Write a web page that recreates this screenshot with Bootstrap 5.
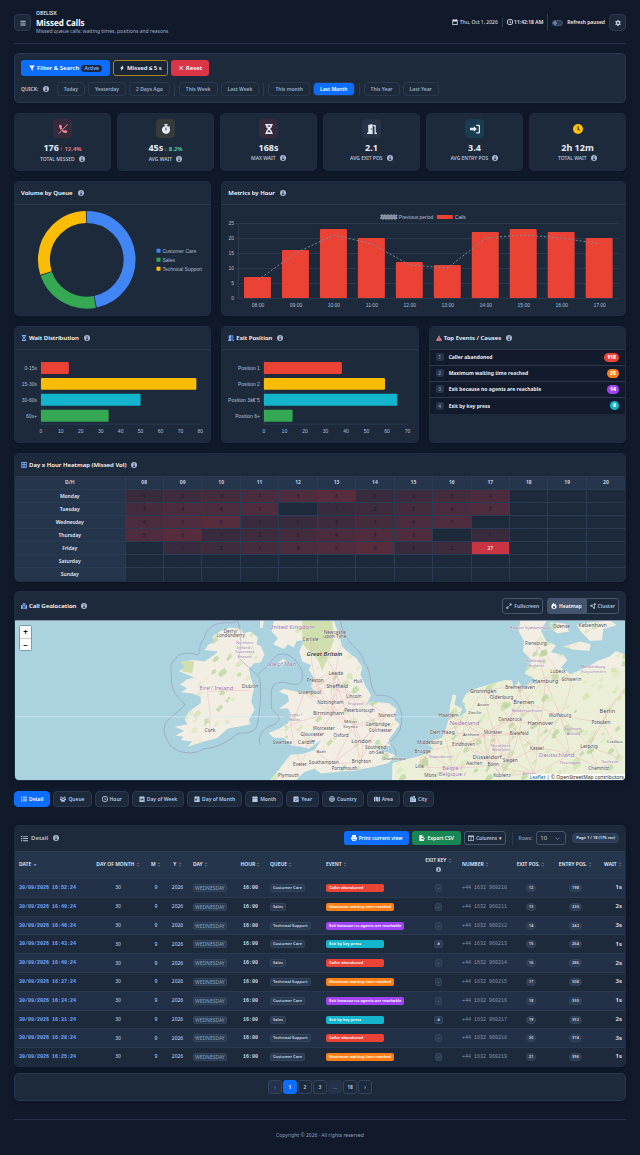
<!DOCTYPE html>
<html lang="en" data-bs-theme="dark">
<head>
<meta charset="utf-8">
<meta name="viewport" content="width=device-width, initial-scale=1">
<title>Missed Calls</title>
<link href="https://cdn.jsdelivr.net/npm/bootstrap@5.3.0/dist/css/bootstrap.min.css" rel="stylesheet">
<style>
:root{--bg:#111a2b;--panel:#1c2a3c;--line:#2a394e;--head:#25354c;--muted:#9fadc3;--ink:#e6ecf5;--soft:#c3cedf}
body{background:var(--bg);color:var(--ink);font:400 6px/8px "Noto Sans",sans-serif}
.page{padding:0 14px 18px}
.mt-10{margin-top:10px}
.ic{width:6px;height:6px;fill:currentColor;flex:none;display:inline-block;vertical-align:-1px}
.inf{color:#a9b9d2;margin-left:3px}
h1{font-size:8px;line-height:11px;font-weight:700;margin:0}
h2{font-size:6px;line-height:8px;font-weight:600;margin:0;display:flex;align-items:center;gap:2px}
h2 .lead-ic{color:#7fb0ff}
.t5{font-size:5px;line-height:7px}
.top{height:44px;border-bottom:1px solid #22304a;padding-top:2px;gap:5px}
.sq{width:17px;height:17px;border:1px solid var(--line);border-radius:4px;background:var(--panel);color:var(--soft);padding:0;display:grid;place-items:center}
.vr-x{width:1px;background:#2b3b52;align-self:center;height:9px}
.vr-x.tall{height:13px;margin:0 1px}
.vr-x.full{height:17px}
.sw{width:11px;height:6px;appearance:none;border:1px solid #4a5a75;border-radius:3px;background:radial-gradient(circle at 2px 2px,#6a7b98 2px,#2b3b52 2px);margin:0}
.panel{background:var(--panel);border:1px solid #1f2d40;border-radius:5px;box-shadow:0 2px 5px #0a111f80;overflow:hidden}
.panel.edge{border-color:var(--line)}
.ph{height:23px;padding:0 6px;border-bottom:1px solid var(--line);display:flex;align-items:center}
.b{border:1px solid transparent;border-radius:3px;height:16px;padding:0 6px;font-weight:600;color:#fff;background:none;display:inline-flex;align-items:center;justify-content:center;gap:2px;font-size:6px;line-height:8px;white-space:nowrap}
.blue{background:#0d6efd}.red{background:#dc3545}.green{background:#198754}
.filterbox{margin-top:9px;padding:6px}
.first{gap:3px;margin-bottom:6px}.quick{gap:3px}
.wide{width:89px}.warnb{border-color:#a9841c;background:#1a2536;padding:0 5px}
.ql{font-size:5px;font-weight:600;color:var(--soft);margin-right:5px}
.pill{height:14px;color:var(--muted);border-color:var(--line);border-radius:4px;font-size:5px;padding:0 6px}
.pill.blue{color:#fff}
.act{font-size:5px;line-height:7px;background:#1b2740;color:#9ec5ff;border-radius:4px;padding:0 3px;font-weight:500}
.kpis{gap:6px}
.kpi{flex:1 1 0;height:58px;text-align:center;padding-top:5px}
.kic{width:19px;height:19px;border-radius:4px;display:grid;place-items:center;margin:0 auto 4px}
.kic .ic{width:10px;height:10px}
.kv{font-size:9px;line-height:12px;font-weight:700}
.kv small{font-size:6px;font-weight:600;margin-left:1px}
.kl{font-size:5px;line-height:7px;color:var(--soft);font-weight:500;margin-top:1px}
.r10{--bs-gutter-x:10px;--bs-gutter-y:10px}
svg.chart{display:block;width:100%}
svg.chart text{font:5px "Liberation Sans",Arial,sans-serif;fill:#b3bfd1}
.ev{background:#121b2c;border-bottom:1px solid var(--line);height:16px;padding:0 6px;gap:5px;font-weight:700;font-size:5px}
.ev i{font-style:normal;font-weight:400;font-size:5px;line-height:8px;width:8px;text-align:center;background:#25354c;color:var(--muted);border-radius:2px}
.ev b{margin-left:auto;border-radius:5px;font-size:5px;line-height:9px;padding:0 3px;color:#fff}
table{width:100%;table-layout:fixed;border-collapse:collapse}
.heat{font-size:5px;line-height:7px;text-align:center}
.heat td,.heat th{border:1px solid #2a3c54;padding:0;height:13px}
.heat thead th{background:var(--head);color:var(--soft);border-top:0}
.heat tbody th{background:var(--head);font-weight:600}
.heat td{color:#131c2c}
.heat tr>:first-child{border-left:0;width:110px}.heat tr>:last-child{border-right:0}
.heat tr:last-child>*{border-bottom:0}
.geo{height:28px;border-bottom:0}
.map{position:relative;height:160px;background:#aad3df;border-top:1px solid #8d99ad}
.map>svg{width:100%;height:100%;display:block}
.map text{font-family:"Noto Sans",sans-serif;text-anchor:middle;paint-order:stroke;stroke:#ffffffa0;stroke-width:2px;fill:#4c4c50}
.zoomer{position:absolute;left:4px;top:4px;width:13px;border:1px solid #7d9ba5;border-radius:2px;overflow:hidden;background:#fff}
.zoomer button{display:block;width:100%;height:12px;border:0;background:#fff;color:#111;font-weight:700;font-size:8px;line-height:11px;padding:0}
.zoomer button+button{border-top:1px solid #ccc}
.attr{position:absolute;right:0;bottom:0;background:#ffffffcc;color:#333;font-size:5px;line-height:6px;padding:0 1px;white-space:nowrap}
.attr a{color:#0078a8;text-decoration:none}
.ob{border-color:#46566e;color:#b8c5d9;padding:0 3px;gap:2px;font-size:5px}
.ob.on{background:#44546c;color:#fff}
.tabs{gap:3px}
.tab{background:var(--panel);border-color:var(--line);color:#b8c9e4;border-radius:4px;padding:0 6px;font-size:5px}
.tab.blue{color:#fff;border-color:#0d6efd;background:#0d6efd}
.detail{margin-top:18px}
.dh{height:26px}
.dtl{color:#b8c5d9}
.dtl .ic:first-child{width:7px;height:7px;margin-right:1px}
.tools{gap:3px}.tools .b{height:14px;font-size:5px}.tools .vr-x{margin:0 3px}
.tools label{margin-right:1px;color:var(--muted);font-size:5px}
.dt{height:214px;font-size:5px;line-height:7px}
.dt td,.dt th{padding:0 4px;vertical-align:middle;white-space:nowrap}
.dt th{background:var(--head);height:27px;font-size:5px;font-weight:600;text-transform:uppercase;border-bottom:1px solid var(--line)}
.dt th .srt{color:#56677f;width:4px;height:5px}
.dt th .cur{color:#74a9ff}
.dt .inf{width:5px;height:5px;margin:3px 0 0}
.dt td{border-bottom:1px solid var(--line);color:#d0d9e7}
.dt tr:nth-child(odd) td{background:#233148}
.dt tr:last-child td{border-bottom:0}
.mono{font-family:"Liberation Mono",monospace}
.dt .dte{color:#74a9ff;font-weight:700}
.chip{display:inline-block;background:#2a3a51;border:1px solid #33445c;border-radius:2px;font-size:4px;line-height:6px;padding:0 2px;font-weight:600}
.chip.day{font-size:5px;font-weight:400;color:#92a1b8;padding:0 1px}
.chip.rd{border-radius:4px;background:#2d3d54}
.chip.num{color:var(--soft)}
.pgs{line-height:8px;margin-left:3px;padding:0 3px}
.evt{display:inline-block;min-width:58px;border-radius:2px;color:#fff;font-weight:600;font-size:4px;line-height:8px;padding:0 3px}
.nm{color:#8494ad}.wt{font-size:6px;font-weight:600;color:#e6ecf5}
.sel{width:30px;height:14px;background:transparent url("data:image/svg+xml,%3Csvg xmlns='http://www.w3.org/2000/svg' viewBox='0 0 16 16'%3E%3Cpath fill='none' stroke='%239fadc3' stroke-width='2' d='m2 5 6 6 6-6'/%3E%3C/svg%3E") no-repeat right 5px center/5px;border:1px solid #46566e;border-radius:3px;color:var(--soft);font-size:6px;line-height:8px;padding:0 3px;appearance:none}
.pager{margin-top:6px;padding:6px;gap:1px}
.pg{width:14px;height:14px;border:1px solid #33445c;border-radius:3px;color:var(--soft);font-size:5px;font-weight:600;text-decoration:none;display:grid;place-items:center}
.pg.off{background:#25334a;color:#71819b}
.pg.cur{background:#0d6efd;border-color:#0d6efd;color:#fff}
footer{border-top:1px solid #22304a;margin-top:18px;padding-top:11px;text-align:center;color:#93a0b6;font-size:5px}
</style>
</head>
<body>
<svg width="0" height="0" class="position-absolute" aria-hidden="true">
<symbol id="i-menu" viewBox="0 0 16 16"><path d="M1 2h14v2.500H1zM1 7h14v2.500H1zM1 12h14v2.500H1z"/></symbol>
<symbol id="i-info" viewBox="0 0 16 16"><path fill-rule="evenodd" d="M8 0a8 8 0 1 0 0 16A8 8 0 0 0 8 0zM7 3h2.500v2.300H7zM6 6.700h3.500V11H11v2H5.500v-2H7V8.700H6z"/></symbol>
<symbol id="i-sort" viewBox="0 0 12 16"><path d="m6 1 5 5H1zM6 15l5-5H1z"/></symbol>
<symbol id="i-down" viewBox="0 0 12 16"><path d="m6 13 6-6H0z"/></symbol>
<symbol id="i-filter" viewBox="0 0 16 16"><path d="M.5 1h15L10 8.500V15l-4-2.500v-4z"/></symbol>
<symbol id="i-bolt" viewBox="0 0 16 16"><path d="M10.500 0 3 9h4l-1.500 7L13 6.500H9z"/></symbol>
<symbol id="i-x" viewBox="0 0 16 16"><path d="m3.500 2 4.500 4.500L12.500 2 14 3.500 9.500 8l4.500 4.500-1.500 1.500L8 9.500 3.500 14 2 12.500 6.500 8 2 3.500z"/></symbol>
<symbol id="i-cal" viewBox="0 0 16 16"><path fill-rule="evenodd" d="M4 0h2v2h4V0h2v2h3v14H1V2h3zM3 6.500V14h10V6.500z"/></symbol>
<symbol id="i-calf" viewBox="0 0 16 16"><path d="M4 0h2v2h4V0h2v2h3v3H1V2h3zM1 6h14v10H1z"/></symbol>
<symbol id="i-calw" viewBox="0 0 16 16"><path fill-rule="evenodd" d="M4 0h2v2h4V0h2v2h3v3H1V2h3zM1 6h14v10H1zm3 2.500v3h8v-3z"/></symbol>
<symbol id="i-cald" viewBox="0 0 16 16"><path fill-rule="evenodd" d="M4 0h2v2h4V0h2v2h3v3H1V2h3zM1 6h14v10H1zm2.500 2v4h4V8z"/></symbol>
<symbol id="i-calc" viewBox="0 0 16 16"><path fill-rule="evenodd" d="M4 0h2v2h4V0h2v2h3v3H1V2h3zM1 6h14v10H1zm3.500 4.500 2.500 3 5-4-1-1.300-3.700 3-1.500-1.800z"/></symbol>
<symbol id="i-clock" viewBox="0 0 16 16"><path fill-rule="evenodd" d="M8 0a8 8 0 1 0 0 16A8 8 0 0 0 8 0zm0 2a6 6 0 1 1 0 12A6 6 0 0 1 8 2zM7 4v5l3.500 2 1-1.600L9 8V4z"/></symbol>
<symbol id="i-clockf" viewBox="0 0 16 16"><path fill-rule="evenodd" d="M8 0a8 8 0 1 0 0 16A8 8 0 0 0 8 0zM7.200 3.500v5l3.300 2.300.9-1.300-2.600-1.800V3.500z"/></symbol>
<symbol id="i-gear" viewBox="0 0 16 16"><path fill-rule="evenodd" d="M6.500 0h3l.5 2.300 1.500.8 2.200-.8 1.500 2.600L13.500 6.500v3l1.700 1.600-1.500 2.600-2.200-.8-1.500.8-.5 2.300h-3L6 13.700l-1.500-.8-2.200.8L.8 11.100l1.700-1.600v-3L.8 4.900l1.500-2.600 2.200.8L6 2.300zM8 5.500a2.500 2.500 0 1 0 0 5 2.500 2.500 0 0 0 0-5z"/></symbol>
<symbol id="i-phone" viewBox="0 0 16 16"><path d="M4.500 1 2 1.700C1 4.500 3 8 4.500 9.500L7 7 5.700 5.700 6.500 4zM6 11c2 2 5 4 8 3l1-3-3.500-1.500L10 11 8.500 9.500z"/><path d="m1 15.500 14.500-15" stroke="currentColor" stroke-width="1.500"/></symbol>
<symbol id="i-stop" viewBox="0 0 16 16"><path fill-rule="evenodd" d="M5.500 0h5v2H9v1a6.500 6.500 0 0 1 3 1.300l1-1 1.500 1.400-1.100 1.100A6.500 6.500 0 1 1 7 3V2H5.500zM7.200 5.500v5h1.600v-5z"/></symbol>
<symbol id="i-hour" viewBox="0 0 16 16"><path fill-rule="evenodd" d="M2 0h12v2h-1c0 3-1.500 4.500-3.500 6 2 1.500 3.500 3 3.500 6h1v2H2v-2h1c0-3 1.500-4.500 3.500-6C4.500 6.500 3 5 3 2H2zm3.500 2.500c.2 1 .5 1.500 1 2h3c.5-.5.8-1 1-2zM8 9.500c-1.500 1-2.300 2-2.500 3.500h5C10.300 11.500 9.500 10.500 8 9.500z"/></symbol>
<symbol id="i-door" viewBox="0 0 16 16"><path fill-rule="evenodd" d="M2 1.500 9 0v16H0v-2h2zM6 7v2h1.500V7zM10 1.500h4V14h2v2h-4V3.500h-2z"/></symbol>
<symbol id="i-in" viewBox="0 0 16 16"><path d="M6 3.500 11 8l-5 4.500V10H0V6h6zM10 1h4a2 2 0 0 1 2 2v10a2 2 0 0 1-2 2h-4v-2h4V3h-4z"/></symbol>
<symbol id="i-warn" viewBox="0 0 16 16"><path fill-rule="evenodd" d="M8 .5 16 15H0zM7 5.500v4.500h2V5.500zm0 6V13h2v-1.500z"/></symbol>
<symbol id="i-grid" viewBox="0 0 16 16"><path fill-rule="evenodd" d="M1 0h14v16H1zm2 2.500v3h4v-3zm6 0v3h4v-3zM3 7v3h4V7zm6 0v3h4V7zm-6 4.500v2.500h4v-2.500zm6 0v2.500h4v-2.500z"/></symbol>
<symbol id="i-geo" viewBox="0 0 16 16"><path fill-rule="evenodd" d="M8 0a4 4 0 0 1 4 4c0 2-4 6-4 6S4 6 4 4a4 4 0 0 1 4-4zm0 2.500a1.500 1.500 0 1 0 0 3 1.500 1.500 0 0 0 0-3zM0 6l3-1 2 4v6l-5 1zM6 11l2 1.500L10 11v5l-4-1zM11 9l2-3 3-1v10l-5 1z"/></symbol>
<symbol id="i-full" viewBox="0 0 16 16"><path d="M9 1h6v6l-2-2-3 3-2-2 3-3zM7 15H1V9l2 2 3-3 2 2-3 3z"/></symbol>
<symbol id="i-fire" viewBox="0 0 16 16"><path fill-rule="evenodd" d="M6 0c2 1.500 3 3 4 4l1.500-2C14 4.500 15 7 15 9.500a7 6.500 0 0 1-14 0C1 6 4 3 6 0zm2 6.500c-1.500 2-3 3-3 4.500a3 3 0 0 0 6 0c0-1-.5-2-1-3l-1 1z"/></symbol>
<symbol id="i-share" viewBox="0 0 16 16"><path fill="none" stroke="currentColor" stroke-width="2" d="M13 3 3 7l8 6z"/><circle cx="13" cy="3" r="2.500"/><circle cx="3" cy="7" r="2.500"/><circle cx="11" cy="13" r="2.500"/></symbol>
<symbol id="i-list" viewBox="0 0 16 16"><path d="M0 2h3v2.500H0zM5 2h11v2H5zM0 7h3v2.500H0zM5 7h11v2H5zM0 12h3v2.500H0zM5 12h11v2H5z"/></symbol>
<symbol id="i-users" viewBox="0 0 16 16"><circle cx="3" cy="3" r="2"/><circle cx="13" cy="3" r="2"/><circle cx="8" cy="5.500" r="2.500"/><path d="M0 10c0-3 1-4 4-4l1 3-1 2H0zM16 10c0-3-1-4-4-4l-1 3 1 2h4zM3 15c0-4 1-6 5-6s5 2 5 6z"/></symbol>
<symbol id="i-globe" viewBox="0 0 16 16"><circle cx="8" cy="8" r="7" fill="none" stroke="currentColor" stroke-width="1.500"/><ellipse cx="8" cy="8" rx="3" ry="7" fill="none" stroke="currentColor" stroke-width="1.500"/><path d="M1 5h14v1.500H1zM1 9.500h14V11H1z"/></symbol>
<symbol id="i-map" viewBox="0 0 16 16"><path d="m0 3 4-2v12l-4 2zM5.500 1l5 2v12l-5-2zM12 3l4-2v12l-4 2z"/></symbol>
<symbol id="i-city" viewBox="0 0 16 16"><path fill-rule="evenodd" d="M0 4h3V1h2v3h2V0h6v6h3v10H0zm9-2v2h2V2zm0 4v2h2V6zM2 7v2h2V7zm0 4v2h2v-2zm7-1v2h2v-2z"/></symbol>
<symbol id="i-print" viewBox="0 0 16 16"><path fill-rule="evenodd" d="M3 0h10v5H3zM0 6h16v6h-3v4H3v-4H0zm5 5v3h6v-3z"/></symbol>
<symbol id="i-csv" viewBox="0 0 16 16"><path fill-rule="evenodd" d="M1 0h7v5h5v3H6v3h7v5H1zM9 0l4 4H9zM12 6l4 3.500-4 3.500z"/></symbol>
<symbol id="i-cols" viewBox="0 0 16 16"><path fill-rule="evenodd" d="M0 1h16v14H0zm2 4v8h5V5zm7 0v8h5V5z"/></symbol>
</svg>

<div class="container-fluid page">
<header class="top d-flex align-items-center">
  <button class="sq" aria-label="Menu"><svg class="ic"><use href="#i-menu"/></svg></button>
  <div class="me-auto">
    <div class="t5 fw-bold" style="color:var(--soft)">OBELISK</div>
    <h1>Missed Calls</h1>
    <div class="t5" style="color:var(--muted)">Missed queue calls: waiting times, positions and reasons</div>
  </div>
  <div class="d-flex align-items-center gap-1 t5">
    <span><svg class="ic"><use href="#i-cal"/></svg> Thu, Oct 1, 2026</span>
    <span class="vr-x"></span>
    <span class="fw-semibold"><svg class="ic"><use href="#i-clock"/></svg> 11:42:18 AM</span>
    <span class="vr-x full"></span>
    <input type="checkbox" class="sw" id="refresh"><label for="refresh" class="fw-semibold">Refresh paused</label>
    <button class="sq" aria-label="Settings"><svg class="ic"><use href="#i-gear"/></svg></button>
  </div>
</header>

<section class="panel edge filterbox">
  <div class="d-flex first">
    <button class="b blue wide"><svg class="ic"><use href="#i-filter"/></svg> Filter &amp; Search <span class="act">Active</span></button>
    <button class="b warnb"><svg class="ic"><use href="#i-bolt"/></svg>Missed ≤ 5 s</button>
    <button class="b red"><svg class="ic"><use href="#i-x"/></svg>Reset</button>
  </div>
  <div class="d-flex align-items-center quick">
    <span class="ql">QUICK: <svg class="ic inf"><use href="#i-info"/></svg></span>
    <button class="b pill">Today</button><button class="b pill">Yesterday</button><button class="b pill">2 Days Ago</button>
    <span class="vr-x tall"></span>
    <button class="b pill">This Week</button><button class="b pill">Last Week</button>
    <span class="vr-x tall"></span>
    <button class="b pill">This month</button><button class="b pill blue">Last Month</button>
    <span class="vr-x tall"></span>
    <button class="b pill">This Year</button><button class="b pill">Last Year</button>
  </div>
</section>

<section class="d-flex kpis mt-10" id="kpis"></section>

<section class="row r10 mt-0">
  <div class="col-4"><div class="panel">
    <div class="ph"><h2>Volume by Queue <svg class="ic inf"><use href="#i-info"/></svg></h2></div>
    <svg class="chart" viewBox="15 205 196 110" id="donut">
      <g fill="none" stroke-width="12">
        <circle cx="87" cy="260" r="43" stroke="#4285f4" pathLength="100" stroke-dasharray="46.700 100" transform="rotate(-90 87 260)"/>
        <circle cx="87" cy="260" r="43" stroke="#34a853" pathLength="100" stroke-dasharray="22.700 100" stroke-dashoffset="-47" transform="rotate(-90 87 260)"/>
        <circle cx="87" cy="260" r="43" stroke="#fbbc05" pathLength="100" stroke-dasharray="29.700 100" stroke-dashoffset="-70" transform="rotate(-90 87 260)"/>
      </g>
      <path fill="#4285f4" d="M157 249h4v4h-4z"/><path fill="#34a853" d="M157 258h4v4h-4z"/><path fill="#fbbc05" d="M157 267h4v4h-4z"/>
      <text x="163" y="253">Customer Care</text><text x="163" y="262">Sales</text><text x="163" y="271">Technical Support</text>
    </svg>
  </div></div>
  <div class="col-8"><div class="panel">
    <div class="ph"><h2>Metrics by Hour <svg class="ic inf"><use href="#i-info"/></svg></h2></div>
    <svg class="chart" viewBox="222 205 403 110" id="hours"></svg>
  </div></div>
  <div class="col-4"><div class="panel h-100">
    <div class="ph"><h2><svg class="ic lead-ic"><use href="#i-hour"/></svg>Wait Distribution <svg class="ic inf"><use href="#i-info"/></svg></h2></div>
    <svg class="chart" viewBox="15 350 196 92" id="waits"></svg>
  </div></div>
  <div class="col-4"><div class="panel h-100">
    <div class="ph"><h2><svg class="ic lead-ic"><use href="#i-door"/></svg>Exit Position <svg class="ic inf"><use href="#i-info"/></svg></h2></div>
    <svg class="chart" viewBox="222 350 196 92" id="exits"></svg>
  </div></div>
  <div class="col-4"><div class="panel h-100">
    <div class="ph"><h2><svg class="ic lead-ic" style="color:#ff8a95"><use href="#i-warn"/></svg>Top Events / Causes <svg class="ic inf"><use href="#i-info"/></svg></h2></div>
    <div class="ev d-flex align-items-center"><i>1</i>Caller abandoned<b style="background:#ea4335">118</b></div>
    <div class="ev d-flex align-items-center"><i>2</i>Maximum waiting time reached<b style="background:#fd7e14">35</b></div>
    <div class="ev d-flex align-items-center"><i>3</i>Exit because no agents are reachable<b style="background:#a142f4">14</b></div>
    <div class="ev d-flex align-items-center border-bottom-0"><i>4</i>Exit by key press<b style="background:#12b5cb">9</b></div>
  </div></div>
</section>

<section class="panel mt-10">
  <div class="ph"><h2><svg class="ic lead-ic"><use href="#i-grid"/></svg>Day x Hour Heatmap (Missed Vol) <svg class="ic inf"><use href="#i-info"/></svg></h2></div>
  <table class="heat" id="heat"></table>
</section>

<section class="panel" style="margin-top:9px">
  <div class="ph geo"><h2><svg class="ic lead-ic"><use href="#i-geo"/></svg>Call Geolocation <svg class="ic inf"><use href="#i-info"/></svg></h2>
    <div class="ms-auto d-flex"><button class="b ob me-1"><svg class="ic"><use href="#i-full"/></svg>Fullscreen</button>
    <button class="b ob on rounded-end-0"><svg class="ic"><use href="#i-fire"/></svg>Heatmap</button><button class="b ob rounded-start-0"><svg class="ic"><use href="#i-share"/></svg>Cluster</button></div>
  </div>
  <div class="map">
    <svg viewBox="42 87 1833 480" preserveAspectRatio="xMidYMid slice" id="map">
      <defs><clipPath id="land">
        <path d="M690 108 720 112 728 125 750 120 772 138 768 158 782 165 792 190 780 212 760 215 745 232 750 255 760 290 752 330 762 355 745 385 750 398 715 405 680 412 650 440 610 450 560 466 575 450 540 446 548 436 524 433 550 418 522 406 560 398 552 384 565 360 600 335 600 316 575 306 540 302 560 290 538 280 558 264 580 258 550 245 535 240 552 226 540 210 580 205 612 210 640 190 652 180 612 175 622 160 642 150 635 135 660 118z"/>
        <path d="M820 87 813 120 832 140 818 158 850 172 862 158 880 168 888 148 910 146 896 180 905 210 932 220 925 235 942 262 930 285 946 304 900 304 850 292 835 300 862 312 865 330 835 352 862 350 872 370 862 395 840 410 804 425 820 440 850 440 872 462 902 466 925 472 962 446 942 476 905 488 870 490 848 518 832 538 804 570 882 570 912 542 942 532 962 546 1020 540 1060 538 1120 526 1165 515 1187 492 1165 484 1130 474 1145 466 1172 462 1165 445 1183 420 1198 398 1182 385 1188 352 1165 335 1110 330 1092 348 1112 312 1096 285 1080 250 1086 228 1068 200 1050 188 1025 165 1016 130 1000 87z"/>
        <path d="M1175 570 1176 515 1215 505 1265 492 1300 470 1282 460 1312 458 1292 448 1325 440 1338 410 1346 380 1350 340 1358 308 1368 312 1362 340 1386 350 1376 378 1400 360 1386 330 1398 306 1430 290 1480 275 1510 267 1535 266 1540 290 1555 270 1568 292 1590 272 1612 280 1598 258 1574 246 1584 220 1598 210 1568 178 1572 150 1556 120 1560 87 1640 87 1622 116 1638 148 1668 162 1652 182 1690 190 1702 206 1682 228 1712 248 1762 226 1792 208 1826 196 1848 178 1878 190 1878 570z"/>
        <path d="M1650 92 1698 96 1706 120 1672 126 1652 110zM1690 165 1740 150 1772 158 1768 178 1718 174zM1730 100 1770 92 1830 87 1850 100 1810 112 1806 146 1770 148 1742 120zM832 216 846 202 856 206 842 226zM778 87 790 87 786 110 778 108z"/>
      </clipPath></defs>
      <g clip-path="url(#land)"><path fill="#f2eee3" d="M0 0h1900v600H0z"/><path fill="#e9efd3" opacity=".7" d="M1380 230h500v340h-700v-80z"/><g id="green"></g><g id="roads" fill="none" stroke="#f2a6b2" stroke-width="1.500" opacity=".75"></g></g>
      <g fill="none" stroke="#8d7fae" stroke-width="2" opacity=".65">
        <path d="M712 88C690 100 680 88 655 96 632 98 610 122 612 140 588 160 605 178 590 190 560 180 530 184 524 204 500 216 515 240 512 270 515 300 530 320 553 338 540 360 510 370 494 396 482 424 500 445 508 462 540 490 580 490 610 472 660 470 690 440 715 425 750 425 768 420 772 390 780 340 782 300 778 262 772 248 740 225 715 200 718 170 727 140 712 88M772 248 810 215C830 170 880 180 905 240 910 280 890 285 850 272 800 270 815 310 812 350 830 370 850 380 820 400 780 410 770 445 780 460 798 460L798 545 768 567M808 220C812 262 864 262 872 205M690 112 688 155 650 185 660 210 695 224 712 200 735 230"/>
        <path d="M1020 87C1030 160 1085 170 1090 210 1118 240 1100 280 1130 312 1180 305 1205 345 1204 380 1206 410 1190 440 1162 455 1180 460 1200 490 1175 500 1160 525 1156 567M960 560C1020 540 1060 570 1150 545M1162 505 1240 495C1300 460 1320 430 1325 390 1325 340 1330 290 1370 280 1410 265 1450 262 1500 240 1540 230 1570 235 1500 225 1515 205 1530 200 1530 180 1520 150 1530 120 1515 87M1440 265 1480 300 1478 370 1460 400 1425 440 1425 500 1450 567M1235 495 1255 530 1290 567M1560 140C1650 140 1640 190 1720 190 1750 220 1780 170 1830 190M1680 110C1690 180 1720 190 1780 160M1780 210C1800 170 1840 140 1850 160 1880 180 1860 230 1875 250"/>
      </g>
      <path d="M42 376h808M1185 376h160" stroke="#d4edf4" stroke-width="2"/>
      <g id="labels"></g>
    </svg>
    <div class="zoomer"><button aria-label="Zoom in">+</button><button aria-label="Zoom out">−</button></div>
    <div class="attr"><a href="#">Leaflet</a> | © OpenStreetMap contributors</div>
  </div>
</section>

<nav class="d-flex mt-10 tabs" id="tabs"></nav>

<section class="panel detail">
  <div class="ph dh"><h2 class="dtl"><svg class="ic"><use href="#i-list"/></svg> Detail <svg class="ic inf"><use href="#i-info"/></svg></h2>
    <div class="ms-auto d-flex align-items-center tools">
      <button class="b blue"><svg class="ic"><use href="#i-print"/></svg>Print current view</button>
      <button class="b green"><svg class="ic"><use href="#i-csv"/></svg>Export CSV</button>
      <button class="b ob"><svg class="ic"><use href="#i-cols"/></svg>Columns ▾</button>
      <span class="vr-x tall"></span>
      <label for="rows">Rows:</label>
      <select class="sel" id="rows"><option>10</option><option>25</option></select>
      <span class="chip rd pgs">Page 1 / 18 (176 rec)</span>
    </div>
  </div>
  <table class="dt" id="dt"></table>
</section>
<nav class="panel edge pager d-flex justify-content-center">
  <a class="pg off" href="#">‹</a><a class="pg cur" href="#">1</a><a class="pg" href="#">2</a><a class="pg" href="#">3</a><span class="pg off border-0">…</span><a class="pg" href="#">18</a><a class="pg" href="#">›</a>
</nav>
<footer>Copyright © 2026 · All rights reserved</footer>
</div>
<script src="https://cdn.jsdelivr.net/npm/bootstrap@5.3.0/dist/js/bootstrap.bundle.min.js"></script>
<script>
const $ = id => document.getElementById(id);
const icon = (n, c = '') => `<svg class="ic ${c}"><use href="#i-${n}"/></svg>`;

$('kpis').innerHTML = [
  ['phone', '#ff8a95', '#362a3d', '176', 'TOTAL MISSED', '<small style="color:#f0808c">↑ 12.4%</small>'],
  ['stop', '#e6ecf5', '#353b3b', '45s', 'AVG WAIT', '<small style="color:#5fd39a">↓ 8.2%</small>'],
  ['hour', '#e6ecf5', '#362a3d', '168s', 'MAX WAIT', ''],
  ['door', '#e6ecf5', '#273447', '2.1', 'AVG EXIT POS', ''],
  ['in', '#e6ecf5', '#1a3c50', '3.4', 'AVG ENTRY POS', ''],
  ['clockf', '#ffc107', 'transparent', '2h 12m', 'TOTAL WAIT', '']
].map(([i, c, bg, v, l, d]) => `<div class="panel kpi"><div class="kic" style="background:${bg};color:${c}">${icon(i)}</div><div class="kv">${v}${d}</div><div class="kl">${l} ${icon('info', 'inf')}</div></div>`).join('');

/* Calls per hour, with the previous period as a dashed line */
const calls = [7,16,23,20,12,11,22,23,22,20], prev = [6,15,21,18,11,10,20,21,20,18];
let s = '';
for (let v = 0; v <= 25; v += 5) s += `<path d="M236 ${298 - v * 3}.5H619" stroke="#2b3a4f"/><text x="234" y="${300 - v * 3}" text-anchor="end">${v}</text>`;
s += '<path d="M238.500 223V299" stroke="#2b3a4f"/>';
calls.forEach((v, i) => { const x = 258 + i * 38; s += `<rect x="${x - 14}" y="${298 - v * 3}" width="27" height="${v * 3}" rx="1" fill="#ea4335"/><text x="${x}" y="307" text-anchor="middle">${String(8 + i).padStart(2, '0')}:00</text>`; });
s += `<polyline points="${prev.map((v, i) => (258 + i * 38) + ',' + (298 - v * 3)).join(' ')}" fill="none" stroke="#7f8b9b" stroke-dasharray="2 2" stroke-linejoin="round"/>`;
s += '<path d="M381 215h16v4h-16z" fill="#828c9d" stroke="#9aa4b3" stroke-dasharray="2 1"/><text x="399" y="219">Previous period</text><path d="M437 215h16v4h-16z" fill="#ea4335"/><text x="455" y="219">Calls</text>';
$('hours').innerHTML = s;

function hbars(id, x0, step, max, rows) {
  const col = ['#ea4335', '#fbbc05', '#12b5cb', '#34a853'];
  let o = `<path d="M${x0}.5 360V424.500H${x0 + step * max / 10}" fill="none" stroke="#2b3a4f"/>`;
  rows.forEach(([l, v], i) => { const y = 362 + i * 16; o += `<text x="${x0 - 4}" y="${y + 8}" text-anchor="end">${l}</text><rect x="${x0}" y="${y}" width="${v * step / 10}" height="12" rx="1" fill="${col[i]}"/>`; });
  for (let v = 0; v <= max; v += 10) o += `<text x="${x0 + v * step / 10}" y="433" text-anchor="middle">${v}</text>`;
  $(id).innerHTML = o;
}
hbars('waits', 41, 20, 80, [['0-15s', 14], ['15-30s', 78], ['30-60s', 50], ['60s+', 34]]);
hbars('exits', 264, 20.6, 70, [['Position 1', 38], ['Position 2', 59], ['Position 3â€“5', 65], ['Position 6+', 14]]);

/* Heatmap: cell tint grows with the number of missed calls */
const days = { Monday: '1234561234', Tuesday: '3445-12345', Wednesday: '456112345-', Thursday: '56123455-1', Friday: '-12345612X', Saturday: '----------', Sunday: '----------' };
let h = '<thead><tr><th>D/H</th>';
for (let i = 8; i <= 20; i++) h += `<th>${String(i).padStart(2, '0')}</th>`;
h += '</tr></thead><tbody>';
for (const d in days) h += `<tr><th>${d}</th>` + [...days[d] + '---'].map(c => c === '-' ? '<td>-</td>' : c === 'X' ? '<td style="background:#c93445;color:#fff">27</td>' : `<td style="background:rgba(220,53,69,${.11 + c * .033})">${c}</td>`).join('') + '</tr>';
$('heat').innerHTML = h + '</tbody>';

/* Map terrain and place names */
let seed = 7; const rnd = () => (seed = seed * 16807 % 2147483647) / 2147483647;
let g = '', r = '';
for (let i = 0; i < 420; i++) { const x = 520 + rnd() * 1360, y = 90 + rnd() * 480, a = 3 + rnd() * 11, b = 2 + rnd() * 7; g += `<path fill="${['#cfe3ae', '#b5d59a', '#dce8bd', '#f4e9dc'][i % 4]}" opacity=".7" d="M${x | 0} ${y | 0}l${a | 0} -${b | 0} ${b | 0} ${a | 0} -${b | 0} ${b | 0} -${a | 0} ${b | 0} -${b | 0} -${b | 0}z"/>`; }
g += '<path fill="#c5dca0" opacity=".8" d="M905 87h90l5 60-30 80-25-30-40-40zM540 205l40 5-5 35-30-5zM960 130l25 60-20 50-20-60z"/>';
const towns = [[748,296],[628,428],[690,150],[620,300],[930,150],[945,270],[910,305],[1005,245],[1010,283],[990,335],[995,365],[1085,452],[1060,400],[1130,400],[1160,370],[1080,510],[1000,515],[920,455],[900,520],[870,400],[1060,317],[1030,130],[1330,422],[1345,375],[1395,397],[1450,430],[1390,460],[1265,480],[1258,526],[1290,552],[1355,530],[1450,298],[1480,420],[1460,498],[1480,520],[1505,552],[1530,508],[1530,385],[1570,332],[1560,288],[1635,268],[1620,397],[1555,427],[1610,470],[1680,372],[1820,372],[1805,392],[1767,465],[1795,530],[1710,490],[1675,240],[1715,262],[1605,155],[1600,545],[1860,500],[1870,300]];
towns.forEach((a, i) => towns.forEach((b, j) => { const d = Math.hypot(a[0] - b[0], a[1] - b[1]); if (j > i && d < 130) r += `<path d="M${a}q${(b[0] - a[0]) / 2 + rnd() * 20 - 10 | 0} ${(b[1] - a[1]) / 2 + rnd() * 20 - 10 | 0} ${b[0] - a[0]} ${b[1] - a[1]}"/>`; }));
$('green').innerHTML = g; $('roads').innerHTML = r;
const P = '#9573a5';
$('labels').innerHTML = [
 ['United Kingdom',874,112,18,P],['Great Britain',972,192,18,'#333',1],['Isle of Man',843,223,17,P],['Éire / Ireland',647,296,17,P],['Derry/',690,123,14],['Londonderry',690,137,14],['Northern',732,157,12,P],['Ireland /',732,171,12,P],['Tuaisceart',732,185,12,P],['Éireann',732,199,12,P],['Dublin',748,290,16],['Cork',628,423,15],['Carlisle',930,148,14],['Newcastle',1003,126,14],['upon Tyne',1003,140,14],['Leeds',1006,249,16],['Preston',944,272,14],['Liverpool',928,308,16],['Sheffield',1010,288,16],['Hull',1072,273,14],['Lincoln',1060,321,14],['Nottingham',990,338,14],['England',1066,342,12,P],['Birmingham',984,370,16],['Peterborough',1077,363,14],['Norwich',1161,376,14],['Milton',1050,396,13],['Keynes',1050,410,13],['Cambridge',1132,405,14],['Worcester',970,415,14],['Colchester',1140,423,14],['Gloucester',935,435,14],['Oxford',1022,436,14],['London',1083,456,17],['Southend-',1128,473,14],['on-Sea',1128,487,14],['Cymru /',882,375,12,P],['Wales',882,388,12,P],['Swansea',845,457,14],['Cardiff',917,458,16],['Bath',962,486,13],['Exeter',898,525,14],['Southampton',970,519,14],['Brighton',1083,516,14],['Portsmouth',1032,537,14],['Plymouth',864,556,14],
 ['Groningen',1449,303,16],['Assen',1449,343,13],['Zwolle',1423,369,13],['Haarlem',1345,378,15],['Nederland',1393,402,18,P],['Den Haag',1326,429,16],['Arnhem',1413,433,13],['Middelburg',1288,458,14],['Eindhoven',1390,463,14],['Brugge',1267,484,14],['Dunkerque',1183,507,13],['Vlaanderen',1320,501,13,P],['Lille',1258,531,14],['België /',1356,536,17,P],['Belgique /',1356,553,17,P],['Mons',1290,557,14],['Aachen',1422,522,14],['Bonn',1479,525,14],['Düsseldorf',1461,504,17],['Siegen',1530,513,14],['Koblenz',1505,557,14],['Hessen',1588,550,12,P],['Nordrhein-',1503,466,12,P],['Westfalen',1503,480,12,P],['Münster',1478,427,14],['Bielefeld',1557,431,14],['Osnabrück',1530,389,14],['Oldenburg',1504,322,14],['Bremen',1571,338,17],['Bremerhaven',1560,292,14],['Niedersachsen',1580,362,13,P],['Hannover',1621,402,17],['Wolfsburg',1680,377,14],['Hamburg',1636,274,17],['Lübeck',1674,245,14],['Schwerin',1714,267,14],['Mecklenburg-',1780,230,12,P],['Vorpommern',1780,244,12,P],['Schleswig-',1608,212,12,P],['Holstein',1608,226,12,P],['Flensburg',1607,160,14],['Region Syddanmark',1590,111,13,P],['Odense',1684,110,14],['København',1778,106,16],['Berlin',1822,365,17],['Potsdam',1803,397,14],['Sachsen-',1720,416,13,P],['Anhalt',1720,430,13,P],['Leipzig',1767,470,16],['Kassel',1610,475,14],['Deutschland',1670,496,18,P],['Thüringen',1710,517,13,P],['Chemnitz',1796,536,14],['Sachsen',1830,516,13,P],['Cottbus',1844,455,13]
].map(([t, x, y, f, c, b]) => `<text x="${x}" y="${y}" style="font-size:${f}px${c ? ';fill:' + c : ''}${b ? ';font-style:italic;font-weight:600' : ''}">${t}</text>`).join('');

$('tabs').innerHTML = [['list','Detail'],['users','Queue'],['clock','Hour'],['calw','Day of Week'],['cald','Day of Month'],['calf','Month'],['calc','Year'],['globe','Country'],['map','Area'],['city','City']]
 .map(([i, t], n) => `<button class="b tab ${n ? '' : 'blue'}">${icon(i)}${t}</button>`).join('');

/* Detail table */
const cols = [['Date',75,''],['Day of month',56,'c'],['M',20,'c'],['Y',23,'c'],['Day',46,''],['Hour',31,'c'],['Queue',56,''],['Event',97,''],['Exit key',39,'c'],['Number',51,''],['Exit pos.',44,'c'],['Entry pos.',45,'c'],['Wait',28,'e']];
const cls = { c: 'text-center px-0', e: 'text-end', '': '' };
const qs = ['Customer Care', 'Sales', 'Technical Support'];
const ev = [['Caller abandoned', '#ea4335'], ['Maximum waiting time reached', '#fd7e14'], ['Exit because no agents are reachable', '#a142f4'], ['Exit by key press', '#12b5cb']];
const times = ['52','49','46','43','40','37','34','31','28','25'];
let t = '<colgroup>' + cols.map(c => `<col style="width:${c[1]}px">`).join('') + '</colgroup><thead><tr>' + cols.map((c, i) => `<th class="${cls[c[2]]}">${c[0]} ${i ? icon('sort', 'srt') : icon('down', 'srt cur')}${i === 8 ? '<br>' + icon('info', 'inf') : ''}</th>`).join('') + '</tr></thead><tbody>';
times.forEach((m, i) => {
  const e = ev[i % 4];
  const c = [`<span class="mono dte">30/09/2026 16:${m}:24</span>`, '30', '9', '2026', '<span class="chip day">WEDNESDAY</span>', '<b class="mono">16:00</b>', `<span class="chip">${qs[i % 3]}</span>`, `<span class="evt" style="background:${e[1]}">${e[0]}</span>`, `<span class="chip num">${i % 4 === 3 ? '#' : '-'}</span>`, `<span class="mono nm">+44 1632 9602${10 + i}</span>`, `<span class="chip rd">${12 + i}</span>`, `<span class="chip rd">${198 + 22 * i}</span>`, `<b class="wt">${i % 3 + 1}s</b>`];
  t += '<tr>' + c.map((x, k) => `<td class="${cls[cols[k][2]]}">${x}</td>`).join('') + '</tr>';
});
$('dt').innerHTML = t + '</tbody>';
</script>
</body>
</html>
